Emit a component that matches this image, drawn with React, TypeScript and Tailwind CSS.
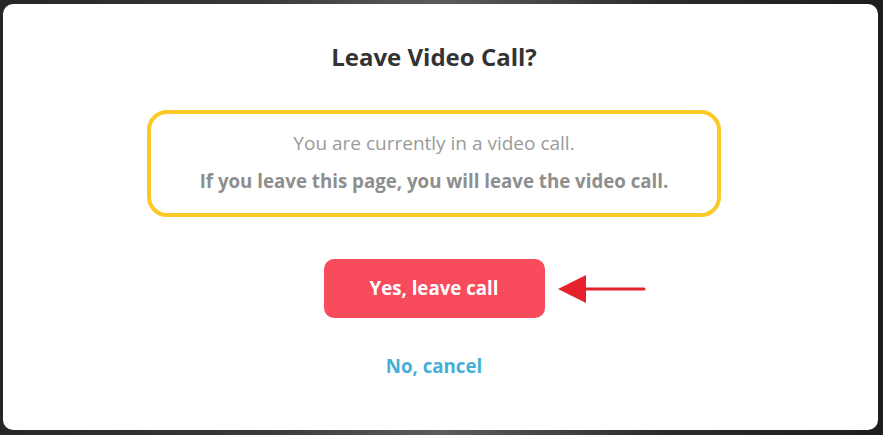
import React from 'react';

const LeaveCallArrow: React.FC = () => (
    <svg width="90" height="32" viewBox="0 0 90 32" className="absolute left-[calc(100%+12px)] top-1/2 -translate-y-1/2">
        <line x1="26" y1="16" x2="87" y2="16" stroke="#e3222b" strokeWidth="3" strokeLinecap="round" />
        <polygon points="1,16 29,2 29,30" fill="#e3222b" />
    </svg>
);

const App: React.FC = () => {
    return (
        <div className="w-[883px] h-[435px] pt-[4px] pr-[5px] pb-[5px] pl-[3px] bg-[linear-gradient(90deg,#262725_0%,#3a3a38_30%,#5c5c5c_50%,#2c2b2a_75%,#1e1e1c_100%)] font-['Open_Sans','Noto_Sans',sans-serif]">
            <div className="h-full bg-white rounded-[10px] flex flex-col items-center pr-[13px]">
                <h1 className="mt-[37px] text-[24px] leading-[32px] font-bold text-[#333333]">Leave Video Call?</h1>

                <div className="mt-[37px] w-[574px] h-[107px] border-4 border-[#fbc928] rounded-[20px] flex flex-col items-center pt-[15px]">
                    <p className="text-[19px] leading-[28px] text-[#9a9a9a]">You are currently in a video call.</p>
                    <p className="mt-[10px] text-[18.7px] leading-[28px] font-bold text-[#8e8e8e]">If you leave this page, you will leave the video call.</p>
                </div>

                <div className="relative mt-[42px]">
                    <button className="w-[221px] h-[59px] rounded-[10px] bg-[#f84c5d] text-white text-[18.7px] font-bold">
                        Yes, leave call
                    </button>
                    <LeaveCallArrow />
                </div>

                <button className="mt-[36px] text-[18.7px] leading-[24px] font-bold text-[#45afd7]">No, cancel</button>
            </div>
        </div>
    );
};

export default App;
